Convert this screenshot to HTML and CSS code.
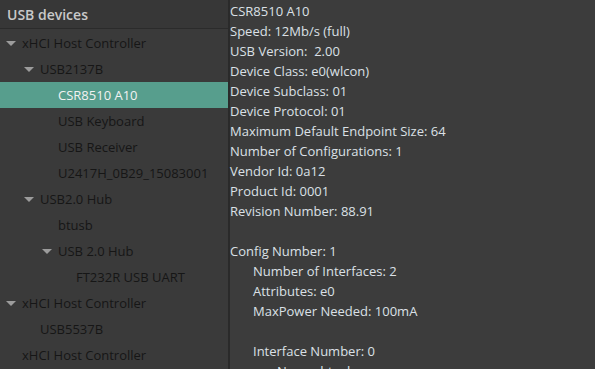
FILE: index.html
```html
<!DOCTYPE html>
<html>
<head>
<meta charset="utf-8">
<link rel="stylesheet" href="styles.css">
</head>
<body>
<div class="app">
  <div class="side">
    <div class="side-head">USB devices</div>
    <div class="tree">
      <div class="row l0"><span class="arrow"></span>xHCI Host Controller</div>
      <div class="row l1"><span class="arrow"></span>USB2137B</div>
      <div class="row l2 sel"><span class="noarrow"></span>CSR8510 A10</div>
      <div class="row l2"><span class="noarrow"></span>USB Keyboard</div>
      <div class="row l2"><span class="noarrow"></span>USB Receiver</div>
      <div class="row l2"><span class="noarrow"></span>U2417H_0B29_15083001</div>
      <div class="row l1"><span class="arrow"></span>USB2.0 Hub</div>
      <div class="row l2"><span class="noarrow"></span>btusb</div>
      <div class="row l2"><span class="arrow"></span>USB 2.0 Hub</div>
      <div class="row l3"><span class="noarrow"></span>FT232R USB UART</div>
      <div class="row l0"><span class="arrow"></span>xHCI Host Controller</div>
      <div class="row l1"><span class="noarrow"></span>USB5537B</div>
      <div class="row l0"><span class="noarrow"></span>xHCI Host Controller</div>
    </div>
  </div>
  <div class="divider"></div>
  <div class="detail">
    <div class="line">CSR8510 A10</div>
    <div class="line">Speed: 12Mb/s (full)</div>
    <div class="line">USB Version:&nbsp; 2.00</div>
    <div class="line">Device Class: e0(wlcon)</div>
    <div class="line">Device Subclass: 01</div>
    <div class="line">Device Protocol: 01</div>
    <div class="line">Maximum Default Endpoint Size: 64</div>
    <div class="line">Number of Configurations: 1</div>
    <div class="line">Vendor Id: 0a12</div>
    <div class="line">Product Id: 0001</div>
    <div class="line">Revision Number: 88.91</div>
    <div class="line blank"></div>
    <div class="line">Config Number: 1</div>
    <div class="line i1">Number of Interfaces: 2</div>
    <div class="line i1">Attributes: e0</div>
    <div class="line i1">MaxPower Needed: 100mA</div>
    <div class="line blank"></div>
    <div class="line i1">Interface Number: 0</div>
    <div class="line i2">Name: btusb</div>
  </div>
</div>
</body>
</html>
```
FILE: styles.css
```css
html, body {
  margin: 0;
  padding: 0;
  background: #3c3c3c;
  overflow: hidden;
}
.app {
  display: flex;
  width: 595px;
  height: 369px;
  font-family: "Open Sans", "Noto Sans", sans-serif;
  font-size: 13px;
}
.side {
  width: 228px;
  flex: none;
  background: #3a3a3a;
  display: flex;
  flex-direction: column;
}
.side-head {
  height: 28px;
  line-height: 30px;
  padding-left: 7px;
  color: #c9c9c9;
  font-size: 14px;
  font-weight: 600;
  background: #373737;
  border-bottom: 1px solid #2b2b2b;
  flex: none;
}
.tree {
  padding-top: 1px;
}
.row {
  height: 26px;
  line-height: 26px;
  display: flex;
  align-items: center;
  color: #161616;
  white-space: nowrap;
}
.row.sel {
  background: #579e8d;
  color: #f2f2f2;
}
.l0 { padding-left: 5px; }
.l1 { padding-left: 23px; }
.l2 { padding-left: 41px; }
.l3 { padding-left: 59px; }
.arrow, .noarrow {
  width: 17px;
  height: 26px;
  flex: none;
  position: relative;
}
.arrow::before {
  content: "";
  position: absolute;
  left: 1px;
  top: 11px;
  border-left: 5px solid transparent;
  border-right: 5px solid transparent;
  border-top: 5px solid #9c9c9c;
}
.divider {
  width: 2px;
  flex: none;
  background: #2a2a2a;
}
.detail {
  flex: 1;
  padding-top: 1px;
  color: #dbe0e6;
}
.line {
  height: 20px;
  line-height: 20px;
  white-space: nowrap;
}
.i1 { padding-left: 23px; }
.i2 { padding-left: 47px; }
```
